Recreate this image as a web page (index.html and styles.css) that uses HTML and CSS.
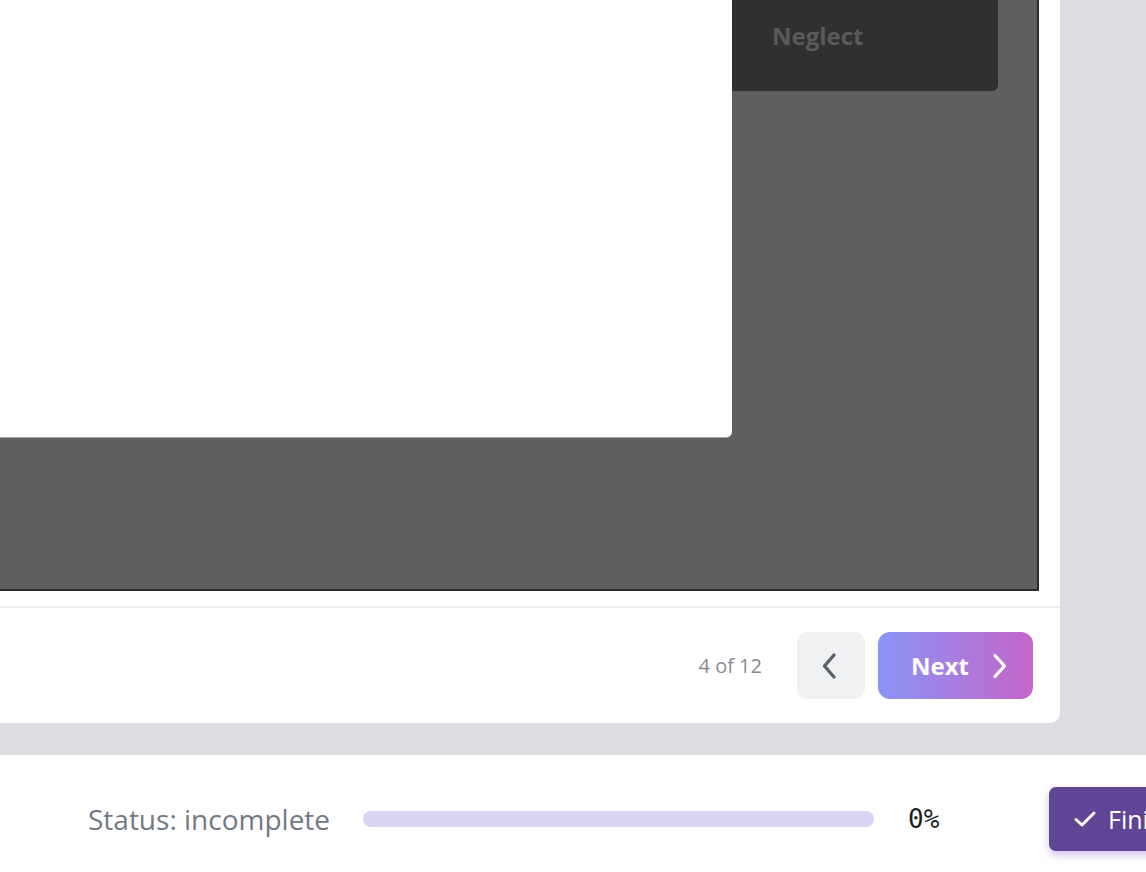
FILE: index.html
```html
<!DOCTYPE html>
<html lang="en">
<head>
<meta charset="utf-8">
<title>Lesson step</title>
<link rel="stylesheet" href="styles.css">
</head>
<body>
<div class="page">
  <section class="card">
    <div class="stage">
      <div class="sheet"></div>
      <div class="side">
        <span class="side-label">Neglect</span>
      </div>
    </div>
    <footer class="card-footer">
      <span class="counter">4 of 12</span>
      <button class="btn-prev" type="button" aria-label="Previous">
        <svg width="18" height="28" viewBox="0 0 18 28"><path d="M14 3 L4.5 14 L14 25" fill="none" stroke="#5b6068" stroke-width="3.4" stroke-linecap="round" stroke-linejoin="round"/></svg>
      </button>
      <button class="btn-next" type="button">
        <span>Next</span>
        <svg width="18" height="26" viewBox="0 0 18 26"><path d="M4 2.5 L13.5 13 L4 23.5" fill="none" stroke="#ffffff" stroke-width="3.2" stroke-linecap="round" stroke-linejoin="round"/></svg>
      </button>
    </footer>
  </section>
  <div class="statusbar">
    <span class="status-text">Status: incomplete</span>
    <div class="progress"><div class="progress-fill" style="width:0%"></div></div>
    <span class="percent">0%</span>
    <button class="btn-finish" type="button">
      <svg width="24" height="18" viewBox="0 0 24 18"><path d="M3 9.5 L9 15 L21 3" fill="none" stroke="#ffffff" stroke-width="3" stroke-linecap="round" stroke-linejoin="round"/></svg>
      <span>Finish</span>
    </button>
  </div>
</div>
</body>
</html>
```

FILE: styles.css
```css
html, body {
  margin: 0;
  padding: 0;
  overflow: hidden;
}

body {
  background: #dcdde0;
  font-family: "Open Sans", "Noto Sans", sans-serif;
  width: 1146px;
  height: 872px;
}

.page {
  display: flex;
  flex-direction: column;
}

.card {
  width: 1060px;
  background: #ffffff;
  border-radius: 0 0 10px 0;
}

.stage {
  display: flex;
  align-items: flex-start;
  width: 1037px;
  height: 589px;
  background: #5f5f5f;
  border-right: 2px solid #2c2c2c;
  border-bottom: 2px solid #2c2c2c;
}

.sheet {
  width: 732px;
  height: 437px;
  background: #ffffff;
  border-bottom: 1px solid #a3a3a3;
  border-radius: 0 0 6px 0;
}

.side {
  width: 266px;
  height: 91px;
  box-sizing: border-box;
  padding: 20px 0 0 40px;
  background: #2f3030;
  border-radius: 0 0 6px 0;
}

.side-label {
  font-size: 24px;
  line-height: 32px;
  font-weight: 700;
  color: #5a5a5a;
}

.card-footer {
  margin-top: 15px;
  border-top: 2px solid #eeeeee;
  height: 117px;
  box-sizing: border-box;
  display: flex;
  align-items: center;
  justify-content: flex-end;
  padding: 0 27px 0 0;
}

.counter {
  font-size: 20px;
  color: #878a91;
  margin-right: 35px;
}

.btn-prev {
  width: 68px;
  height: 67px;
  border: none;
  border-radius: 11px;
  background: #f0f1f3;
  display: flex;
  align-items: center;
  justify-content: center;
  padding: 0 4px 0 0;
  margin-right: 13px;
  cursor: pointer;
}

.btn-next {
  width: 155px;
  height: 67px;
  border: none;
  border-radius: 12px;
  background: linear-gradient(90deg, #8a94f6 0%, #c566c8 100%);
  display: flex;
  align-items: center;
  padding: 0 0 0 33px;
  gap: 22px;
  color: #ffffff;
  font-family: "Open Sans", "Noto Sans", sans-serif;
  font-size: 24px;
  font-weight: 700;
  cursor: pointer;
}

.statusbar {
  margin-top: 32px;
  height: 128px;
  background: #ffffff;
  display: flex;
  align-items: center;
  padding-left: 88px;
}

.status-text {
  font-size: 28px;
  color: #737884;
  margin-right: 33px;
  white-space: nowrap;
}

.progress {
  width: 511px;
  height: 16px;
  border-radius: 8px;
  background: #d9d5f3;
  flex: none;
  overflow: hidden;
}

.progress-fill {
  height: 100%;
  background: #5f4593;
}

.percent {
  font-family: "DejaVu Sans Mono", monospace;
  font-size: 26px;
  color: #1f1f1f;
  margin-left: 34px;
  width: 141px;
  flex: none;
}

.btn-finish {
  flex: none;
  height: 64px;
  border: none;
  border-radius: 7px;
  background: #5f4593;
  box-shadow: 0 4px 8px rgba(120, 90, 190, 0.35);
  display: flex;
  align-items: center;
  gap: 11px;
  padding: 0 30px 0 24px;
  color: #ffffff;
  font-family: "Open Sans", "Noto Sans", sans-serif;
  font-size: 25px;
  cursor: pointer;
}
```
